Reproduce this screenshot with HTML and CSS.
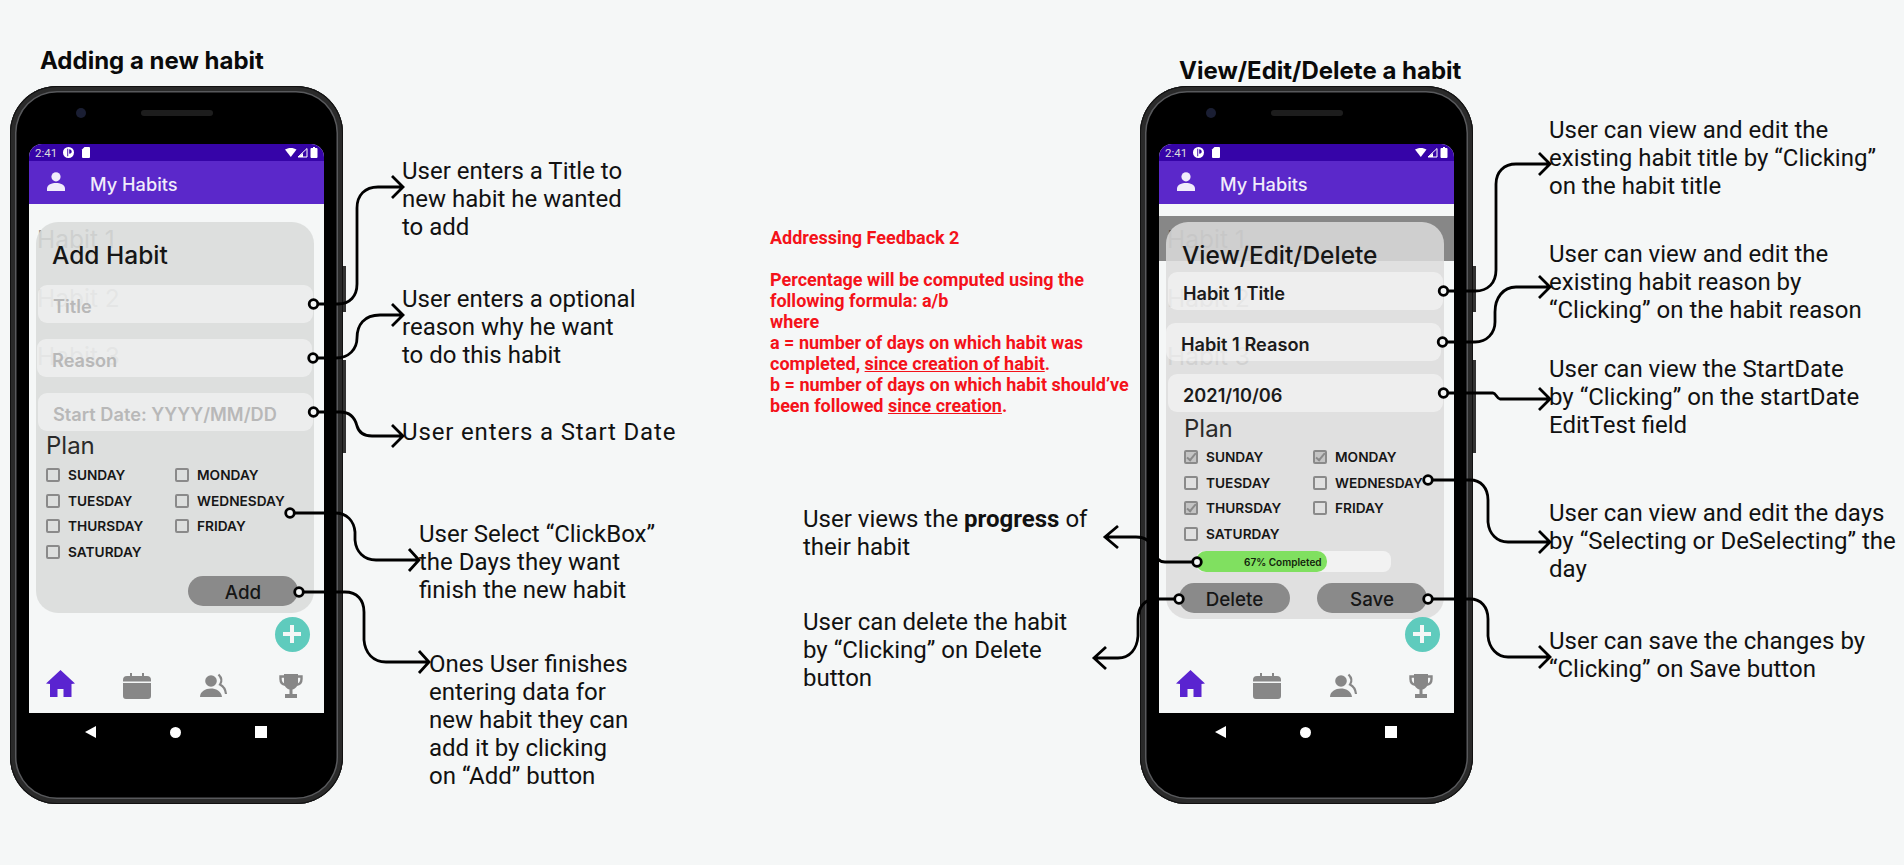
FILE: index.html
```
<!DOCTYPE html>
<html lang="en">
<head>
<meta charset="utf-8">
<title>My Habits wireframes</title>
<link rel="stylesheet" href="styles.css">
</head>
<body>

<svg class="defs" width="0" height="0">
	<symbol id="i-person" viewBox="0 0 18 19">
		<circle cx="9" cy="4.8" r="4.6" fill="currentColor"/>
		<path d="M0 19v-2.6C0 12.8 5 11 9 11s9 1.800 9 5.400V19z" fill="currentColor"/>
	</symbol>
	<symbol id="i-home" viewBox="0 0 30 34">
		<path d="M15.500 4 30 17.500 26.500 18V31H18.500V23H12.500V31H5V18L1 17.500z" fill="currentColor"/>
	</symbol>
	<symbol id="i-cal" viewBox="0 0 30 34">
		<path d="M8 7h2v3H8zM20 7h2v3h-2z" fill="currentColor"/>
		<path d="M5 10h20a4 4 0 0 1 4 4v1.500H1V14a4 4 0 0 1 4-4zM1 17h28v13a3 3 0 0 1-3 3H4a3 3 0 0 1-3-3z" fill="currentColor"/>
	</symbol>
	<symbol id="i-people" viewBox="0 0 30 34">
		<circle cx="12" cy="15" r="5.800" fill="currentColor"/>
		<path d="M1 31c0-5.500 5.500-8.500 11-8.500 4.500 0 10.500 2.500 11 8.500z" fill="currentColor"/>
		<path d="M19.500 8.500c3 3 3.500 7 1.500 10 3 1.500 5.500 5 6 9.500" fill="none" stroke="currentColor" stroke-width="2.200"/>
	</symbol>
	<symbol id="i-trophy" viewBox="0 0 30 34">
		<path d="M8 8h14v8.500c0 4-3 6.500-5.500 7V28H21v4H9v-4h4.500v-4.500C11 23 8 20.500 8 16.500z" fill="currentColor"/>
		<path d="M8.500 10.500H4.500V13c0 3.500 2 5.500 5 5.800M21.500 10.500h4V13c0 3.500-2 5.500-5 5.800" fill="none" stroke="currentColor" stroke-width="2.400"/>
	</symbol>
	<symbol id="i-plus" viewBox="0 0 20 20">
		<path d="M8 1h4v7h7v4h-7v7H8v-7H1V8h7z" fill="currentColor"/>
	</symbol>
	<symbol id="i-status-left" viewBox="0 0 27 11">
		<circle cx="5.500" cy="5.500" r="5.500" fill="#fff"/>
		<path d="M5.200 1.800h-.9v7.400h.9zM6.200 2.200c1.600 0 2.500 1 2.500 2.300S7.800 6.800 6.200 6.800z" fill="#3604a8"/>
		<path d="M20 1.500 21.500 0H26a1 1 0 0 1 1 1v9a1 1 0 0 1-1 1h-6a1 1 0 0 1-1-1V2.500z" fill="#fff"/>
	</symbol>
	<symbol id="i-status-right" viewBox="0 0 34 11">
		<path d="M0 2.500C3 .4 8.500.4 11.500 2.500L5.800 10z" fill="#fff"/>
		<path d="M22 1.500V10h-9z" fill="none" stroke="#fff" stroke-width="1"/>
		<path d="M18 6v4h-5z" fill="#fff"/>
		<path d="M28.500 0h2v1h1.500a1 1 0 0 1 1 1v8a1 1 0 0 1-1 1h-5a1 1 0 0 1-1-1V2a1 1 0 0 1 1-1h1.500z" fill="#fff" transform="translate(-.5)"/>
	</symbol>
</svg>

<div class="canvas">

	<h1 class="heading heading-add">Adding a new habit</h1>
	<h1 class="heading heading-edit">View/Edit/Delete a habit</h1>

	<!-- first phone: add -->
	<div class="phone phone-add">
		<div class="bezel"><span class="camera"></span><span class="speaker"></span></div>
		<div class="screen">
			<div class="statusbar">
				<span class="clock">2:41</span>
				<svg class="status-left"><use href="#i-status-left"/></svg>
				<svg class="status-right"><use href="#i-status-right"/></svg>
			</div>
			<div class="toolbar">
				<svg class="person"><use href="#i-person"/></svg>
				<span class="app-title">My Habits</span>
			</div>
			<div class="content">
				<div class="habits">
					<div class="habit">Habit 1</div>
					<div class="habit">Habit 2</div>
					<div class="habit">Habit 3</div>
				</div>
				<div class="tabs">
					<svg class="tab tab-on"><use href="#i-home"/></svg>
					<svg class="tab"><use href="#i-cal"/></svg>
					<svg class="tab"><use href="#i-people"/></svg>
					<svg class="tab"><use href="#i-trophy"/></svg>
				</div>
				<div class="dialog dialog-add">
					<h2 class="dialog-title">Add Habit</h2>
					<div class="field hint">Title</div>
					<div class="field field-shift hint">Reason</div>
					<div class="field hint">Start Date: YYYY/MM/DD</div>
					<div class="plan">Plan</div>
					<div class="days">
						<label class="day"><span class="box"></span>SUNDAY</label>
						<label class="day"><span class="box"></span>MONDAY</label>
						<label class="day"><span class="box"></span>TUESDAY</label>
						<label class="day"><span class="box"></span>WEDNESDAY</label>
						<label class="day"><span class="box"></span>THURSDAY</label>
						<label class="day"><span class="box"></span>FRIDAY</label>
						<label class="day"><span class="box"></span>SATURDAY</label>
					</div>
					<div class="actions actions-add">
						<div class="btn">Add</div>
					</div>
				</div>
				<div class="fab"><svg class="plus"><use href="#i-plus"/></svg></div>
			</div>
		</div>
		<div class="keys"><span class="key-back"></span><span class="key-home"></span><span class="key-recent"></span></div>
	</div>

	<!-- second phone: view / edit / delete -->
	<div class="phone phone-edit">
		<div class="bezel"><span class="camera"></span><span class="speaker"></span></div>
		<div class="screen">
			<div class="statusbar">
				<span class="clock">2:41</span>
				<svg class="status-left"><use href="#i-status-left"/></svg>
				<svg class="status-right"><use href="#i-status-right"/></svg>
			</div>
			<div class="toolbar">
				<svg class="person"><use href="#i-person"/></svg>
				<span class="app-title">My Habits</span>
			</div>
			<div class="content">
				<div class="habits">
					<div class="habit habit-picked">Habit 1</div>
					<div class="habit">Habit 2</div>
					<div class="habit">Habit 3</div>
				</div>
				<div class="tabs">
					<svg class="tab tab-on"><use href="#i-home"/></svg>
					<svg class="tab"><use href="#i-cal"/></svg>
					<svg class="tab"><use href="#i-people"/></svg>
					<svg class="tab"><use href="#i-trophy"/></svg>
				</div>
				<div class="dialog dialog-edit">
					<h2 class="dialog-title">View/Edit/Delete</h2>
					<div class="field">Habit 1 Title</div>
					<div class="field field-shift">Habit 1 Reason</div>
					<div class="field">2021/10/06</div>
					<div class="plan">Plan</div>
					<div class="days">
						<label class="day"><span class="box checked"></span>SUNDAY</label>
						<label class="day"><span class="box checked"></span>MONDAY</label>
						<label class="day"><span class="box"></span>TUESDAY</label>
						<label class="day"><span class="box"></span>WEDNESDAY</label>
						<label class="day"><span class="box checked"></span>THURSDAY</label>
						<label class="day"><span class="box"></span>FRIDAY</label>
						<label class="day"><span class="box"></span>SATURDAY</label>
					</div>
					<div class="progress">
						<div class="progress-fill" style="width:67%">67% Completed</div>
					</div>
					<div class="actions actions-edit">
						<div class="btn btn-delete">Delete</div>
						<div class="btn">Save</div>
					</div>
				</div>
				<div class="fab"><svg class="plus"><use href="#i-plus"/></svg></div>
			</div>
		</div>
		<div class="keys"><span class="key-back"></span><span class="key-home"></span><span class="key-recent"></span></div>
	</div>

	<!-- notes next to the first phone -->
	<p class="note n-title">User enters a Title to<br>new habit he wanted<br>to add</p>
	<p class="note n-reason">User enters a optional<br>reason why he want<br>to do this habit</p>
	<p class="note n-date">User enters a Start Date</p>
	<p class="note n-days">User Select “ClickBox”<br>the Days they want<br>finish the new habit</p>
	<p class="note n-add">Ones User finishes<br>entering data for<br>new habit they can<br>add it by clicking<br>on “Add” button</p>

	<p class="feedback">Addressing Feedback 2<br><br>Percentage will be computed using the<br>following formula: a/b<br>where<br>a = number of days on which habit was<br>completed, <u>since creation of habit</u>.<br>b = number of days on which habit should’ve<br>been followed <u>since creation</u>.</p>

	<!-- notes next to the second phone -->
	<p class="note n-progress">User views the <b>progress</b> of<br>their habit</p>
	<p class="note n-delete">User can delete the habit<br>by “Clicking” on Delete<br>button</p>
	<p class="note n-etitle">User can view and edit the<br>existing habit title by “Clicking”<br>on the habit title</p>
	<p class="note n-ereason">User can view and edit the<br>existing habit reason by<br>“Clicking” on the habit reason</p>
	<p class="note n-edate">User can view the StartDate<br>by “Clicking” on the startDate<br>EditTest field</p>
	<p class="note n-edays">User can view and edit the days<br>by “Selecting or DeSelecting” the<br>day</p>
	<p class="note n-esave">User can save the changes by<br>“Clicking” on Save button</p>

	<!-- connectors drawn over everything -->
	<svg class="wires" viewBox="0 0 1904 865">
		<g class="wire">
			<path d="M318 304H338C350 304 357 296 357 284V208C357 195 365 187 378 187H403M392 176 403 187 392 198"/>
			<path d="M318 358H336C349 358 357 349 357 338C357 325 364 315 380 315H403M392 304 403 315 392 326"/>
			<path d="M318 412H340C350 412 355 418 357 426C359 433 364 436 372 436H403M392 425 403 436 392 447"/>
			<path d="M295 513H335C347 513 354 521 355 532V540C356 552 364 560 376 560H419M409 549 419 560 409 571"/>
			<path d="M304 592H345C357 592 364 600 364 612V640C365 653 373 662 386 662H429M419 651 429 662 419 673"/>

			<path d="M1449 291H1475C1488 291 1496 283 1496 270V184C1496 172 1504 164 1516 164H1550M1539 153 1550 164 1539 175"/>
			<path d="M1448 342H1475C1487 342 1495 333 1495 322V312C1495 298 1503 287 1516 287H1550M1539 276 1550 287 1539 298"/>
			<path d="M1449 393H1493C1496 393 1497 399 1500 399H1550M1539 388 1550 399 1539 410"/>
			<path d="M1433 480H1470C1481 480 1488 488 1488 500V522C1489 534 1497 542 1508 542H1550M1539 531 1550 542 1539 553"/>
			<path d="M1433 599H1470C1481 599 1488 607 1488 619V636C1489 648 1497 657 1508 657H1550M1539 646 1550 657 1539 668"/>

			<path d="M1192 562H1165C1159 562 1156 559 1154 552C1152 542 1146 537 1136 537H1105M1118 526 1105 537 1118 548"/>
			<path d="M1174 599H1156C1145 599 1138 607 1138 619V636C1137 649 1130 658 1118 658H1094M1106 647 1094 658 1106 669"/>
		</g>
		<g class="dots">
			<circle cx="313.500" cy="304" r="4.300"/>
			<circle cx="313" cy="358" r="4.300"/>
			<circle cx="313.500" cy="412" r="4.300"/>
			<circle cx="290" cy="513" r="4.300"/>
			<circle cx="299" cy="592" r="4.300"/>
			<circle cx="1443.500" cy="291" r="4.300"/>
			<circle cx="1442.500" cy="342" r="4.300"/>
			<circle cx="1443.500" cy="393" r="4.300"/>
			<circle cx="1428" cy="480" r="4.300"/>
			<circle cx="1428" cy="599" r="4.300"/>
			<circle cx="1197" cy="562" r="4.300"/>
			<circle cx="1179" cy="599" r="4.300"/>
		</g>
	</svg>

</div>
</body>
</html>
```
FILE: styles.css
```
html,body {margin:0;padding:0;background:#F5F7F7;}
body {font-family:"Inter","Liberation Sans",sans-serif;color:#111;}
.defs {position:absolute;}

.canvas {position:relative;width:1904px;height:865px;overflow:hidden;}

.heading {position:absolute;margin:0;font-size:24px;line-height:28px;font-weight:700;color:#0a0a0a;white-space:nowrap;}
.heading-add {left:40px;top:47px;}
.heading-edit {left:1179px;top:57px;}

/* phone shell */
.phone {position:absolute;top:86px;width:333px;height:718px;box-sizing:border-box;padding:0 19px;background:#000;border-radius:47px;
	box-shadow:inset 0 0 0 1px #111,inset 0 0 0 5px #2a2a2a,inset 0 0 0 6.500px #58595c;}
.phone::before,.phone::after {content:"";position:absolute;left:333px;width:3px;background:#333;}
.phone::before {top:180px;height:46px;}
.phone::after {top:274px;height:93px;}
.phone-add {left:10px;}
.phone-edit {left:1140px;}

.bezel {display:flex;align-items:center;height:56px;padding:0 0 2px 47px;box-sizing:border-box;margin-bottom:2px;}
.camera {width:10px;height:10px;border-radius:50%;background:#1a1e33;}
.speaker {width:72px;height:6px;margin-left:55px;border-radius:3px;background:#1d1d1d;}

.screen {display:flex;flex-direction:column;width:295px;height:569px;border-radius:13px 13px 0 0;overflow:hidden;background:#F5F7F7;}

.statusbar {display:flex;align-items:center;height:17px;padding:0 5px 0 6px;background:#3604A8;color:#ddd;font-family:"Roboto",sans-serif;font-size:11.5px;}
.clock {width:28px;}
.status-left {width:27px;height:11px;}
.status-right {width:34px;height:11px;margin-left:auto;}

.toolbar {display:flex;align-items:center;height:43px;background:#5B28CA;color:#F1ECFB;}
.person {width:18px;height:19px;margin-left:18px;margin-top:-3px;}
.app-title {margin-left:25px;padding-top:2px;font-size:18.200px;font-weight:500;}

/* list under the dialog */
.content {position:relative;flex:1;display:flex;flex-direction:column;}
.habits {flex:1;padding-top:12px;}
.habit {height:45px;margin-bottom:13.500px;padding-left:8px;font-size:24.500px;line-height:47px;color:#929292;}
.habit-picked {background:#878787;color:#555;}

.tabs {display:flex;gap:47px;padding-left:16px;height:60px;align-items:center;color:#878787;}
.tab {width:30px;height:34px;}
.tab-on {color:#5A24D0;}

/* dialog, lies over the list */
.dialog {position:absolute;left:7px;top:18px;width:278px;box-sizing:border-box;padding-top:19px;border-radius:22px;background:rgba(220,220,220,.85);}
.dialog-add {height:391px;padding-left:10px;background:rgba(216,218,217,.85);}
.dialog-edit {height:397px;padding-left:18px;}

.dialog-title {margin:0;font-size:24.500px;line-height:28px;font-weight:500;color:#161616;white-space:nowrap;}
.dialog-add .dialog-title {margin-left:6px;margin-bottom:16px;}
.dialog-edit .dialog-title {margin-left:-2px;margin-bottom:3px;}

.field {width:275px;height:38px;box-sizing:border-box;padding:3px 0 0 15px;border-radius:9px;background:rgba(255,255,255,.45);font-size:18.200px;line-height:36px;font-weight:600;color:#1b1b1b;white-space:nowrap;}
.dialog-add .field {margin:0 0 16px -8px;}
.dialog-add .field-shift {margin-left:-9px;}
.dialog-edit .field {margin:0 0 13px -16px;}
.dialog-edit .field-shift {margin-left:-18px;}
.hint {color:#b8b8b8;}
.dialog-add .field:nth-of-type(3) {margin-bottom:1px;}
.dialog-edit .field:nth-of-type(3) {margin-bottom:3px;}

.plan {font-size:24px;line-height:28px;color:#2a2a2a;}
.dialog-add .plan {margin-bottom:2px;}
.dialog-edit .plan {margin-bottom:1px;}

.days {display:grid;grid-template-columns:129px 129px;grid-auto-rows:25.700px;}
.day {display:flex;align-items:center;font-size:13.700px;font-weight:600;color:#161616;white-space:nowrap;}
.box {display:block;width:14px;height:14px;box-sizing:border-box;margin-right:8px;border:2px solid #8A8A8A;border-radius:2px;}
.checked {background:#C4C4C4;}
.checked::after {content:"";display:block;width:3px;height:8px;margin:-1px 0 0 2.500px;border:solid #8A8A8A;border-width:0 2px 2px 0;transform:rotate(40deg);}

.progress {width:195px;height:21px;margin:4px 0 0 12px;border-radius:8px;background:#F2F2F2;}
.progress-fill {height:21px;box-sizing:border-box;padding:1px 0 0 48px;border-radius:10px;background:#80E060;font-size:10px;line-height:21px;font-weight:600;color:#12240c;white-space:nowrap;}

.actions {display:flex;}
.actions-add {margin:11px 0 0 142px;}
.actions-edit {gap:27px;margin:11px 0 0 -5px;}
.btn {width:110px;height:30px;border-radius:15px;background:#8A8A8A;text-align:center;font-size:18.800px;line-height:33px;font-weight:500;color:#161616;}
.btn-delete {width:111px;}

.fab {position:absolute;left:245.500px;top:412.500px;display:flex;align-items:center;justify-content:center;width:35px;height:35px;border-radius:50%;background:#5FCBBD;color:#F5F7F7;}
.plus {width:20px;height:20px;}

/* android keys */
.keys {display:flex;align-items:center;gap:74px;height:38px;padding-left:56px;}
.key-back {width:11px;height:12px;background:#fff;clip-path:polygon(100% 0,100% 100%,0 50%);}
.key-home {width:11px;height:11px;border-radius:50%;background:#fff;}
.key-recent {width:12px;height:12px;background:#fff;}

/* notes */
.note {position:absolute;margin:0;font-family:"Roboto",sans-serif;font-size:24px;line-height:28px;color:#111;white-space:nowrap;}
.n-title {left:402px;top:157px;}
.n-reason {left:402px;top:285px;}
.n-date {left:402px;top:418px;letter-spacing:.85px;}
.n-days {left:419px;top:520px;}
.n-add {left:429px;top:650px;}
.n-progress {left:803px;top:505px;}
.n-delete {left:803px;top:608px;}
.n-etitle {left:1549px;top:116px;}
.n-ereason {left:1549px;top:240px;}
.n-edate {left:1549px;top:355px;}
.n-edays {left:1549px;top:499px;}
.n-esave {left:1549px;top:627px;}

.feedback {position:absolute;left:770px;top:227px;margin:0;font-family:"Roboto",sans-serif;font-size:18px;line-height:21px;font-weight:700;color:#F4121A;white-space:nowrap;}

.wires {position:absolute;left:0;top:0;width:1904px;height:865px;pointer-events:none;}
.wire path {fill:none;stroke:#000;stroke-width:2.800;}
.dots circle {fill:#F5F7F7;stroke:#000;stroke-width:2.800;}
```
